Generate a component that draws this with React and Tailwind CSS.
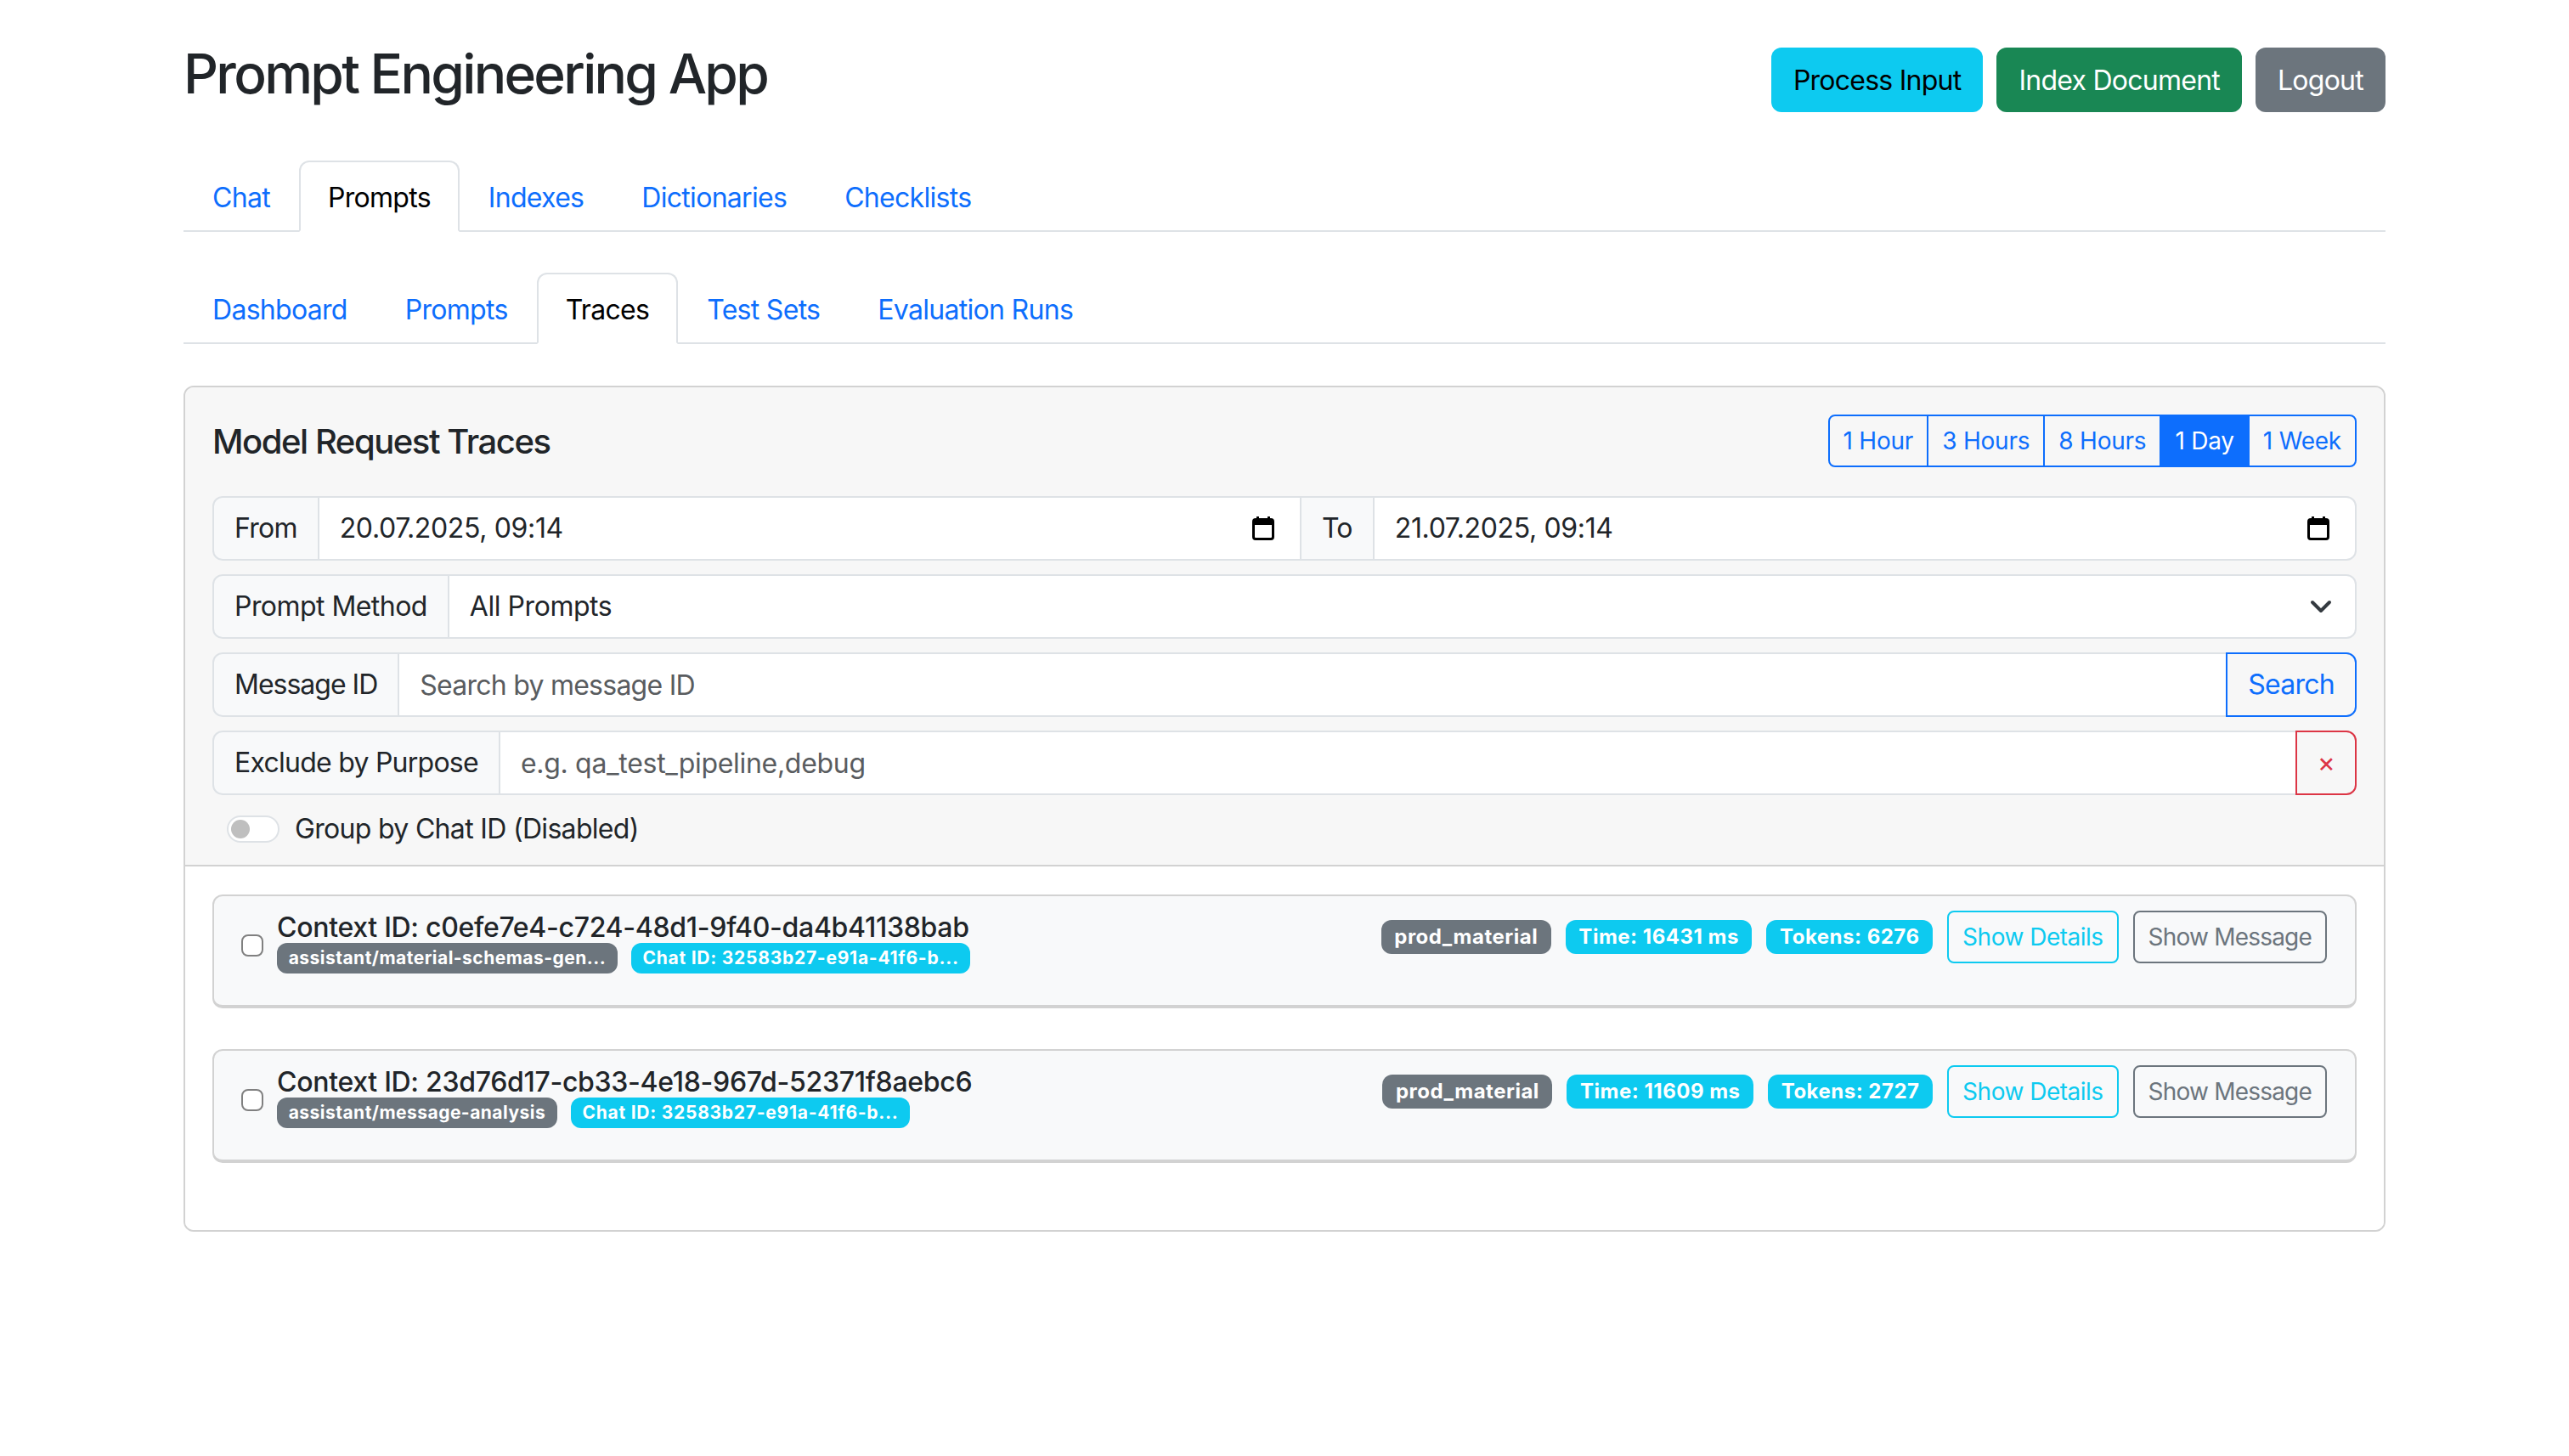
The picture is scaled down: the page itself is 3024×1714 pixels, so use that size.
const CalendarIcon = () => (
  <svg width="26" height="28" viewBox="0 0 26 28" className="shrink-0">
    <rect x="1.5" y="3.5" width="23" height="23" rx="2.5" fill="none" stroke="#000" strokeWidth="3" />
    <rect x="1" y="3" width="24" height="7" fill="#000" />
    <rect x="5" y="0" width="3" height="5" fill="#000" />
    <rect x="18" y="0" width="3" height="5" fill="#000" />
  </svg>
);

const ChevronIcon = () => (
  <svg width="32" height="32" viewBox="0 0 16 16" className="shrink-0">
    <path d="m3 5.5 5 5 5-5" fill="none" stroke="#343a40" strokeWidth="2" strokeLinecap="round" strokeLinejoin="round" />
  </svg>
);

const tabClass = (active) =>
  active
    ? "-mb-[2px] rounded-t-[12px] border-2 border-[#dee2e6] border-b-white bg-white px-[32px] pb-[14px] pt-[18px] tracking-[-0.7px] text-black"
    : "-mb-[2px] rounded-t-[12px] border-2 border-transparent px-[32px] pb-[14px] pt-[18px] tracking-[-0.7px] text-[#0d6efd]";

const Tabs = ({ items, active, className }) => (
  <div className={`flex h-[84px] border-b-2 border-[#dee2e6] ${className}`}>
    {items.map((item) => (
      <a key={item} className={tabClass(item === active)}>
        {item}
      </a>
    ))}
  </div>
);

const Label = ({ children, first, className = "" }) => (
  <span
    className={`flex h-[76px] shrink-0 items-center whitespace-nowrap border-2 border-[#dee2e6] bg-[#f8f9fa] px-[24px] text-[#212529] ${
      first ? "rounded-l-[12px]" : "-ml-[2px]"
    } ${className}`}
  >
    {children}
  </span>
);

const DateField = ({ value, last }) => (
  <div
    className={`-ml-[2px] flex h-[76px] min-w-0 flex-1 items-center justify-between border-2 border-[#dee2e6] bg-white pl-[24px] pr-[30px] text-[#212529] ${
      last ? "rounded-r-[12px]" : ""
    }`}
  >
    <span className="tracking-[-0.35px]">{value}</span>
    <CalendarIcon />
  </div>
);

const TextField = ({ placeholder, className = "" }) => (
  <input
    readOnly
    placeholder={placeholder}
    className={`-ml-[2px] h-[76px] min-w-0 flex-1 border-2 border-[#dee2e6] bg-white px-[24px] text-[#212529] outline-none placeholder:text-[#595c5f] ${className}`}
  />
);

const TraceItem = ({ id, purpose, time, tokens }) => (
  <div className="mb-[48px] rounded-[12px] border-2 border-b-4 border-[#d2d2d2] bg-[#f8f9fa]">
    <div className="flex items-start justify-between pb-[29px] pl-[32px] pr-[33px] pt-[17px]">
      <div className="flex h-[82px] items-center gap-[16px]">
        <input
          type="checkbox"
          readOnly
          className="h-[26px] w-[26px] appearance-none rounded-[8px] border-2 border-[#808080] bg-white"
        />
        <div className="self-start">
          <div className="pt-[2px] text-[32px] font-medium leading-[36px] tracking-[-0.3px] text-[#212529]">
            Context ID: {id}
          </div>
          <div className="flex gap-[16px]">
            <span className="rounded-[12px] bg-[#6c757d] px-[13.65px] py-[7.35px] text-[21px] font-bold leading-none tracking-[0.47px] text-white">
              {purpose}
            </span>
            <span className="rounded-[12px] bg-[#0dcaf0] px-[13.65px] py-[7.35px] text-[21px] font-bold leading-none tracking-[0.75px] text-white">
              Chat ID: 32583b27-e91a-41f6-b...
            </span>
          </div>
        </div>
      </div>
      <div className="flex items-center gap-[17px]">
        <span className="rounded-[12px] bg-[#6c757d] px-[15.6px] py-[8.4px] text-[24px] font-bold leading-none tracking-[0.5px] text-white">
          prod_material
        </span>
        <span className="rounded-[12px] bg-[#0dcaf0] px-[15.6px] py-[8.4px] text-[24px] font-bold leading-none tracking-[0.5px] text-white">
          Time: {time} ms
        </span>
        <span className="rounded-[12px] bg-[#0dcaf0] px-[15.6px] py-[8.4px] text-[24px] font-bold leading-none tracking-[0.5px] text-white">
          Tokens: {tokens}
        </span>
        <button className="h-[62px] rounded-[8px] border-2 border-[#0dcaf0] px-[16px] text-[28px] tracking-[-0.5px] text-[#0dcaf0]">
          Show Details
        </button>
        <button className="h-[62px] rounded-[8px] border-2 border-[#6c757d] px-[16px] text-[28px] tracking-[-0.8px] text-[#6c757d]">
          Show Message
        </button>
      </div>
    </div>
  </div>
);

const ranges = ["1 Hour", "3 Hours", "8 Hours", "1 Day", "1 Week"];

export default function App() {
  return (
    <div className="min-h-[1714px] bg-white font-[Inter,sans-serif] text-[32px] leading-[48px] tracking-[-0.75px] text-[#212529]">
      <div className="mx-auto w-[2592px] pt-[56px]">
        <div className="mb-[57px] flex items-start justify-between">
          <h2 className="-mt-[8px] mb-[2px] text-[64px] font-medium leading-[77px] tracking-[-2.7px]">Prompt Engineering App</h2>
          <div className="flex gap-[16px]">
            <button className="h-[76px] rounded-[12px] bg-[#0dcaf0] px-[26px] pt-[2px] text-black">Process Input</button>
            <button className="h-[76px] rounded-[12px] bg-[#198754] px-[26px] pt-[2px] text-white">Index Document</button>
            <button className="h-[76px] rounded-[12px] bg-[#6c757d] px-[26px] pt-[2px] text-white">Logout</button>
          </div>
        </div>

        <Tabs
          items={["Chat", "Prompts", "Indexes", "Dictionaries", "Checklists"]}
          active="Prompts"
          className="mb-[48px]"
        />
        <Tabs
          items={["Dashboard", "Prompts", "Traces", "Test Sets", "Evaluation Runs"]}
          active="Traces"
          className="mb-[49px]"
        />

        <div className="overflow-hidden rounded-[12px] border-2 border-[#d2d2d2]">
          <div className="border-b-2 border-[#d2d2d2] bg-[#f7f7f7] px-[32px] pb-[18px] pt-[32px]">
            <div className="mb-[34px] flex items-center justify-between">
              <h5 className="pt-[2px] text-[40px] font-medium leading-[48px] tracking-[-1.45px]">Model Request Traces</h5>
              <div className="flex text-[28px] leading-[42px] tracking-[-0.22px]">
                {ranges.map((range, i) => (
                  <button
                    key={range}
                    className={`-ml-[2px] h-[62px] border-2 border-[#0d6efd] px-[16px] first:ml-0 first:rounded-l-[8px] last:rounded-r-[8px] ${
                      i === 3 ? "bg-[#0d6efd] text-white" : "text-[#0d6efd]"
                    }`}
                  >
                    {range}
                  </button>
                ))}
              </div>
            </div>

            <div className="flex flex-col gap-[16px]">
              <div className="flex">
                <Label first>From</Label>
                <DateField value="20.07.2025, 09:14" />
                <Label>To</Label>
                <DateField value="21.07.2025, 09:14" last />
              </div>
              <div className="flex">
                <Label first className="tracking-[-0.55px]">Prompt Method</Label>
                <div className="-ml-[2px] flex h-[76px] min-w-0 flex-1 items-center justify-between rounded-r-[12px] border-2 border-[#dee2e6] bg-white pl-[24px] pr-[24px]">
                  <span className="tracking-[-0.45px]">All Prompts</span>
                  <ChevronIcon />
                </div>
              </div>
              <div className="flex">
                <Label first className="tracking-[-1px]">Message ID</Label>
                <TextField placeholder="Search by message ID" />
                <button className="-ml-[2px] h-[76px] rounded-r-[12px] border-2 border-[#0d6efd] px-[24px] text-[#0d6efd]">
                  Search
                </button>
              </div>
              <div className="flex">
                <Label first>Exclude by Purpose</Label>
                <TextField placeholder="e.g. qa_test_pipeline,debug" className="tracking-[-0.3px]" />
                <button className="-ml-[2px] h-[76px] w-[72px] rounded-r-[12px] border-2 border-[#dc3545] text-[#dc3545]">
                  ×
                </button>
              </div>
            </div>

            <div className="mt-[16px] flex h-[48px] items-center gap-[18px] pl-[17px]">
              <span className="flex h-[32px] w-[62px] items-center rounded-full border-2 border-[#dee2e6] bg-white pl-[3px]">
                <span className="h-[22px] w-[22px] rounded-full bg-[#bfbfbf]" />
              </span>
              <span className="tracking-[-0.68px]">Group by Chat ID (Disabled)</span>
            </div>
          </div>

          <div className="bg-white px-[32px] pb-[31px] pt-[33px]">
            <TraceItem
              id="c0efe7e4-c724-48d1-9f40-da4b41138bab"
              purpose="assistant/material-schemas-gen..."
              time="16431"
              tokens="6276"
            />
            <TraceItem
              id="23d76d17-cb33-4e18-967d-52371f8aebc6"
              purpose="assistant/message-analysis"
              time="11609"
              tokens="2727"
            />
          </div>
        </div>
      </div>
    </div>
  );
}
